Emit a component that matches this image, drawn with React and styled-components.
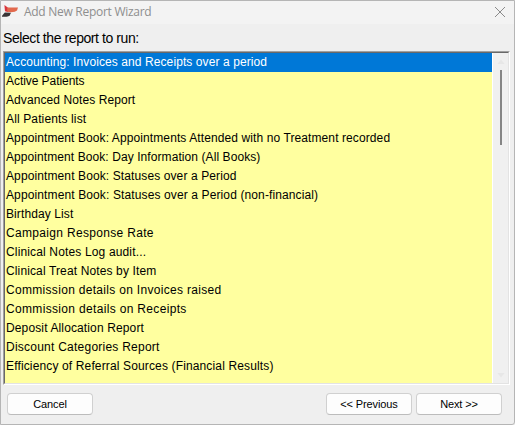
import React, { useState } from 'react';
import styled, { createGlobalStyle } from 'styled-components';

const GlobalStyle = createGlobalStyle`
  * {
    box-sizing: border-box;
  }

  body {
    margin: 0;
    overflow: hidden;
    background: #efefef;
    font-family: 'Liberation Sans', Arial, sans-serif;
  }
`;

const Window = styled.div`
  width: 515px;
  height: 425px;
  display: flex;
  flex-direction: column;
  background: #efefef;
  border: 1px solid #b5b5b5;
  border-bottom-right-radius: 3px;
  color: #000;
`;

const TitleBar = styled.header`
  height: 23px;
  flex: none;
  display: flex;
  align-items: center;
  padding: 0 8px 2px 1px;
  background: #f3f3f3;
`;

const Title = styled.h1`
  margin: 0 auto 0 5px;
  font-family: 'Open Sans', 'Noto Sans', sans-serif;
  font-size: 12px;
  font-weight: 400;
  line-height: 20px;
  letter-spacing: ${({ $tracking }) => $tracking}px;
  color: #8e8e8e;
  white-space: nowrap;
`;

const CloseButton = styled.button`
  display: flex;
  padding: 0;
  border: 0;
  background: none;
`;

const Prompt = styled.p`
  height: 27px;
  flex: none;
  margin: 0;
  padding: 5px 0 0 2px;
  font-size: 14px;
  line-height: 18px;
  letter-spacing: ${({ $tracking }) => $tracking}px;
  white-space: nowrap;
`;

const ListBox = styled.div`
  width: 507px;
  height: 334px;
  flex: none;
  margin-left: 2px;
  border: 1px solid;
  border-color: #a0a0a0 #fff #fff #a0a0a0;
`;

const ListInner = styled.div`
  height: 100%;
  display: flex;
  border: 1px solid;
  border-color: #696969 #e3e3e3 #e3e3e3 #696969;
  background: #fff;
`;

const Items = styled.ul`
  width: 487px;
  margin: 0;
  padding: 0;
  list-style: none;
  overflow: hidden;
  background: #ffff9f;
`;

const Item = styled.li`
  height: 19px;
  padding-left: 1px;
  font-size: 12px;
  line-height: 19px;
  letter-spacing: ${({ $tracking }) => $tracking}px;
  white-space: nowrap;
  color: ${({ $selected }) => ($selected ? '#fff' : '#000')};
  background: ${({ $selected }) => ($selected ? '#0078d7' : 'transparent')};
`;

const ScrollBar = styled.div`
  flex: 1;
  display: flex;
  flex-direction: column;
  align-items: center;
  margin-left: 1px;
  padding: 6px 0 5px 1px;
  background: #f0f0f0;
`;

const Arrow = styled.svg`
  flex: none;
  display: block;
  transform: ${({ $down }) => ($down ? 'rotate(180deg)' : 'none')};
`;

const Thumb = styled.div`
  width: 2px;
  height: 75px;
  margin: 5px 0 auto;
  background: #858585;
`;

const Footer = styled.footer`
  flex: 1;
  display: flex;
  align-items: flex-start;
  gap: 4px;
  padding: 8px 12px 0 6px;
`;

const Button = styled.button`
  width: 86px;
  height: 22px;
  padding: 0;
  margin-right: ${({ $push }) => ($push ? 'auto' : '0')};
  border: 1px solid #d0d0d0;
  border-bottom-color: #bcbcbc;
  border-radius: 4px;
  background: #fdfdfd;
  font-family: inherit;
  font-size: 11px;
  line-height: 20px;
  letter-spacing: ${({ $tracking }) => $tracking}px;
  color: #000;
`;

const reports = [
  { name: 'Accounting: Invoices and Receipts over a period', tracking: 0.09 },
  { name: 'Active Patients', tracking: -0.06 },
  { name: 'Advanced Notes Report', tracking: 0.09 },
  { name: 'All Patients list', tracking: 0.13 },
  { name: 'Appointment Book: Appointments Attended with no Treatment recorded', tracking: 0.1 },
  { name: 'Appointment Book: Day Information (All Books)', tracking: 0.08 },
  { name: 'Appointment Book: Statuses over a Period', tracking: 0.11 },
  { name: 'Appointment Book: Statuses over a Period (non-financial)', tracking: 0.12 },
  { name: 'Birthday List', tracking: 0.1 },
  { name: 'Campaign Response Rate', tracking: 0.32 },
  { name: 'Clinical Notes Log audit...', tracking: 0.15 },
  { name: 'Clinical Treat Notes by Item', tracking: 0.13 },
  { name: 'Commission details on Invoices raised', tracking: 0.31 },
  { name: 'Commission details on Receipts', tracking: 0.33 },
  { name: 'Deposit Allocation Report', tracking: 0.13 },
  { name: 'Discount Categories Report', tracking: 0.24 },
  { name: 'Efficiency of Referral Sources (Financial Results)', tracking: 0.14 }
];

function Logo() {
  return (
    <svg width="17" height="15" viewBox="0 0 17 15">
      <path d="M2.4 1 L6.4 4 V8.2 L3 7.2 Z" fill="#d9343c" />
      <path d="M5.2 3.4 H16 L15 6.6 Q13.5 8 9 8.3 L5.2 7.8 Z" fill="#e2694d" />
      <path d="M0 11.8 L2.8 8.6 L9 8.7 L7.8 11.2 Q7 12.6 4.5 12.8 H0 Z" fill="#383536" />
    </svg>
  );
}

function ScrollArrow({ down }) {
  return (
    <Arrow $down={down} width="8" height="6" viewBox="0 0 8 6">
      <path d="M4 0.5 L7.5 5 H0.5 Z" fill="#e7e7e7" />
    </Arrow>
  );
}

function App() {
  const [selected, setSelected] = useState(0);

  return (
    <>
      <GlobalStyle />
      <Window>
        <TitleBar>
          <Logo />
          <Title $tracking={-0.28}>Add New Report Wizard</Title>
          <CloseButton aria-label="Close">
            <svg width="12" height="12" viewBox="0 0 12 12">
              <path d="M1 1 L11 11 M11 1 L1 11" stroke="#8b8b8b" fill="none" />
            </svg>
          </CloseButton>
        </TitleBar>
        <Prompt $tracking={-0.42}>Select the report to run:</Prompt>
        <ListBox>
          <ListInner>
            <Items>
              {reports.map((report, index) => (
                <Item
                  key={report.name}
                  $selected={index === selected}
                  $tracking={report.tracking}
                  onClick={() => setSelected(index)}
                >
                  {report.name}
                </Item>
              ))}
            </Items>
            <ScrollBar>
              <ScrollArrow />
              <Thumb />
              <ScrollArrow down />
            </ScrollBar>
          </ListInner>
        </ListBox>
        <Footer>
          <Button $push $tracking={-0.1}>Cancel</Button>
          <Button $tracking={-0.12}>&lt;&lt; Previous</Button>
          <Button $tracking={-0.12}>Next &gt;&gt;</Button>
        </Footer>
      </Window>
    </>
  );
}

export default App;
